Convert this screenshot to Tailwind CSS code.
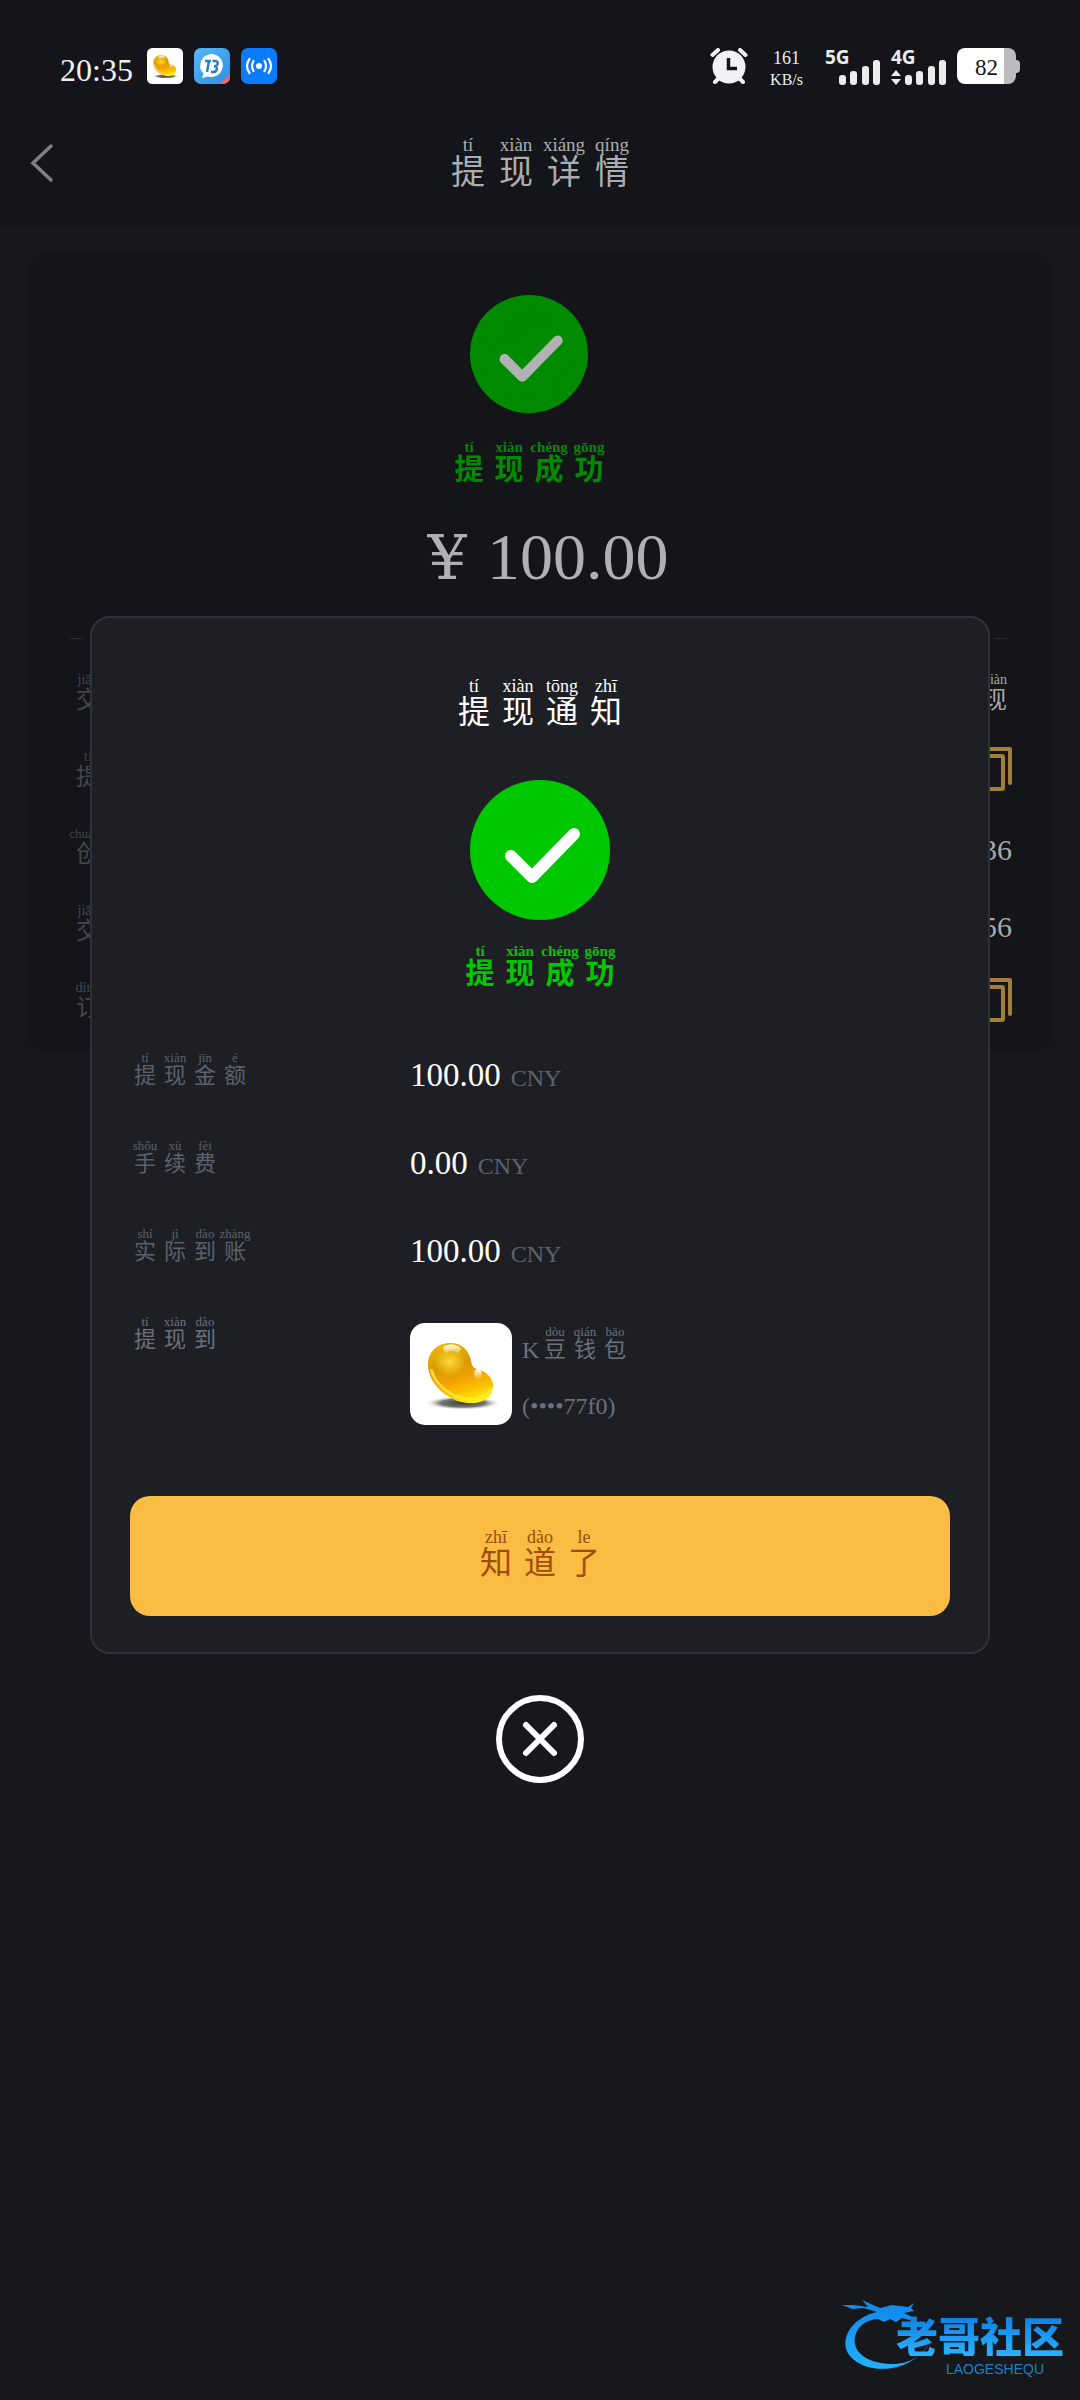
<!DOCTYPE html>
<html lang="zh-CN">
<head>
<meta charset="utf-8">
<meta name="viewport" content="width=device-width, initial-scale=1">
<title>提现详情</title>
<script src="https://cdn.jsdelivr.net/npm/@tailwindcss/browser@4"></script>
</head>
<body class="bg-[#17181c]">
<svg class="absolute size-0" aria-hidden="true">
  <defs>
    <linearGradient id="beanFill" x1="0.3" y1="0" x2="0.6" y2="1">
      <stop offset="0" stop-color="#e9b800"/><stop offset="0.35" stop-color="#d99a00"/><stop offset="0.6" stop-color="#f2a200"/><stop offset="0.82" stop-color="#ffc400"/><stop offset="1" stop-color="#fff200"/>
    </linearGradient>
    <radialGradient id="beanGlow"><stop offset="0" stop-color="#ffd83a"/><stop offset="1" stop-color="#ffd83a" stop-opacity="0"/></radialGradient>
    <radialGradient id="beanShade"><stop offset="0" stop-color="#3c3c3c"/><stop offset="0.6" stop-color="#777777"/><stop offset="1" stop-color="#ffffff" stop-opacity="0"/></radialGradient>
    <linearGradient id="shine" x1="0" y1="0" x2="0" y2="1"><stop offset="0" stop-color="#ffffff"/><stop offset="1" stop-color="#ffffff" stop-opacity="0.1"/></linearGradient>
    <linearGradient id="chat" x1="0" y1="0" x2="1" y2="1"><stop offset="0" stop-color="#56b8f5"/><stop offset="1" stop-color="#2c8fe6"/></linearGradient>
    <linearGradient id="dragon" x1="0" y1="0" x2="0" y2="1"><stop offset="0" stop-color="#0f86ea"/><stop offset="1" stop-color="#23b0ff"/></linearGradient>
    <symbol id="bean" viewBox="0 0 102 102">
      <rect width="102" height="102" rx="15" fill="#fff"/>
      <ellipse cx="53" cy="80" rx="38" ry="7" fill="url(#beanShade)"/>
      <path d="M40 20C52 19 60 29 61 38C62 43 63 45 67 46C78 49 84 57 83 64C82 76 70 81 58 80C38 79 18 60 18 42C18 29 27 20 40 20Z" fill="url(#beanFill)"/>
      <path d="M21 46C25 62 42 76 60 76C70 76 77 72 81 66" fill="none" stroke="#fff04a" stroke-width="3" stroke-opacity="0.7"/>
      <ellipse cx="40" cy="39" rx="16" ry="14" fill="url(#beanGlow)"/>
      <path d="M33 24C38 20 48 21 51 26L49 31C44 27 39 27 35 31Z" fill="url(#shine)"/>
      <ellipse cx="68" cy="51" rx="4" ry="5" fill="url(#shine)"/>
    </symbol>
    <symbol id="signal" viewBox="0 0 41 25">
      <rect x="0" y="15" width="7" height="10" rx="3"/><rect x="11" y="11" width="7" height="14" rx="3"/><rect x="23" y="6" width="7" height="19" rx="3"/><rect x="34" y="0" width="7" height="25" rx="3"/>
    </symbol>
    <symbol id="copy" viewBox="0 0 44 44">
      <path d="M9 2H42V36" fill="none" stroke="currentColor" stroke-width="4" stroke-linecap="round" stroke-linejoin="round"/>
      <rect x="2" y="9" width="33" height="33" rx="1" fill="none" stroke="currentColor" stroke-width="4"/>
    </symbol>
  </defs>
</svg>

<div class="relative min-h-screen overflow-hidden font-['Liberation_Serif','Noto_Sans_CJK_SC',serif] text-white">
  <header class="bg-[#14151a]">
    <div class="flex items-start justify-between pt-12 pr-[60px] pl-[60px]">
      <div class="flex h-[49px] items-start gap-[11px]">
        <time class="mr-[3px] pt-1 text-[32px]/[36px] text-[#f0f0f0]">20:35</time>
        <svg class="size-9"><use href="#bean"/></svg>
        <svg class="size-9" viewBox="0 0 36 36">
          <rect width="36" height="36" rx="7" fill="url(#chat)"/>
          <path d="M36 26V29A7 7 0 0 1 29 36H25Z" fill="#f0646a"/>
          <path d="M18 6A11.5 11.5 0 1 1 14 28.500L8 30L9.500 25.500A11.500 11.500 0 0 1 18 6Z" fill="#fff"/>
          <path d="M11 13H17M15 13L13 24M18.500 13H21.500Q24.500 13.500 23.500 16.500Q22.500 18.300 20 18.300Q23.500 18.500 22.800 21.500Q22 24 19 24H17" fill="none" stroke="#2b7fc2" stroke-width="2.500"/>
        </svg>
        <svg class="size-9" viewBox="0 0 36 36">
          <rect width="36" height="36" rx="7" fill="#0a7cff"/><circle cx="18" cy="18" r="3" fill="#fff"/>
          <path d="M12.500 13Q9.500 18 12.500 23M23.500 13Q26.500 18 23.500 23M8.500 11Q3.500 18 8.500 25M27.500 11Q32.500 18 27.500 25" fill="none" stroke="#fff" stroke-width="2.200" stroke-linecap="round"/>
        </svg>
      </div>
      <div class="flex items-start text-[#ececec]">
        <svg class="mr-[22px] h-9 w-[38px]" viewBox="0 0 38 36">
          <path d="M2.500 7L8 2M35.500 7L30 2M5 34L10 29M33 34L28 29" stroke="#f0f3f3" stroke-width="4" stroke-linecap="round"/>
          <circle cx="19" cy="19" r="16.500" fill="#f0f3f3"/><path d="M18.500 10V20.500H27" fill="none" stroke="#14151a" stroke-width="3.500"/>
        </svg>
        <div class="mr-[22px] flex flex-col items-center">
          <span class="text-[18px]/[20px]">161</span><span class="text-[16px]/[24px]">KB/s</span>
        </div>
        <div class="mr-[11px] flex flex-col">
          <span class="pt-0.5 font-['Noto_Sans'] text-[19px]/[14px] font-bold">5G</span>
          <svg class="-mt-1 ml-[14px] h-[25px] w-[41px] fill-[#ececec]"><use href="#signal"/></svg>
        </div>
        <div class="mr-[11px] flex flex-col">
          <span class="pt-0.5 font-['Noto_Sans'] text-[19px]/[14px] font-bold">4G</span>
          <div class="-mt-1 flex items-end gap-1">
            <svg class="h-[15px] w-[10px] fill-[#ececec]" viewBox="0 0 10 15"><path d="M5 0L10 6H0ZM5 15L0 9H10Z"/></svg>
            <svg class="h-[25px] w-[41px] fill-[#ececec]"><use href="#signal"/></svg>
          </div>
        </div>
        <div class="flex items-center">
          <div class="flex h-9 w-[59px] items-center justify-center rounded-lg bg-linear-to-r from-white from-80% to-[#bcbcbc] to-80% pt-1 text-[23px]/[22px] text-[#14151a]">82</div>
          <div class="h-[13px] w-1 rounded-r-sm bg-[#bcbcbc]"></div>
        </div>
      </div>
    </div>
    <div class="grid h-32 grid-cols-[1fr_auto_1fr] items-center px-[30px] pt-1">
      <button type="button" aria-label="返回" class="justify-self-start">
        <svg class="h-10 w-6" viewBox="0 0 24 40"><path d="M21 3L3 20L21 37" fill="none" stroke="#7d8086" stroke-width="3.500" stroke-linecap="round"/></svg>
      </button>
      <h1 class="flex text-[34px]/[36px] text-[#adadaf]">
        <ruby class="flex w-12 flex-col-reverse items-center">提<rt class="block text-[19px]/[20px]">tí</rt></ruby>
        <ruby class="flex w-12 flex-col-reverse items-center">现<rt class="block text-[19px]/[20px]">xiàn</rt></ruby>
        <ruby class="flex w-12 flex-col-reverse items-center">详<rt class="block text-[19px]/[20px]">xiáng</rt></ruby>
        <ruby class="flex w-12 flex-col-reverse items-center">情<rt class="block text-[19px]/[20px]">qíng</rt></ruby>
      </h1>
    </div>
  </header>

  <main class="mx-7 mt-7 rounded-[20px] bg-[#131519] px-10 pt-[42px] pb-4">
    <div class="flex flex-col items-center pr-[22px]">
      <svg class="size-[118px]" viewBox="0 0 140 140"><circle cx="70" cy="70" r="70" fill="#008a00"/><path d="M41 76L62 97L104 54" fill="none" stroke="#b2b2b4" stroke-width="12" stroke-linecap="round" stroke-linejoin="round"/></svg>
      <p class="mt-[26px] flex text-[29px]/[30px] font-bold text-[#008a00]">
        <ruby class="flex w-10 flex-col-reverse items-center">提<rt class="block text-[15px]/[16px]">tí</rt></ruby>
        <ruby class="flex w-10 flex-col-reverse items-center">现<rt class="block text-[15px]/[16px]">xiàn</rt></ruby>
        <ruby class="flex w-10 flex-col-reverse items-center">成<rt class="block text-[15px]/[16px]">chéng</rt></ruby>
        <ruby class="flex w-10 flex-col-reverse items-center">功<rt class="block text-[15px]/[16px]">gōng</rt></ruby>
      </p>
    </div>
    <p class="mt-10 flex items-baseline justify-center gap-5 pl-4 text-[66px]/[64px] text-[#b0b0b2]"><span class="font-['DejaVu_Serif'] text-[62px]/[64px]">¥</span><span>100.00</span></p>
    <div class="mx-0.5 mt-12 h-px bg-[repeating-linear-gradient(90deg,#2b2d33_0_13px,transparent_13px_21px)]"></div>
    <dl class="mt-[14px] text-[24px]/[24px] text-[#44474e]">
      <div class="flex h-[77px] items-center justify-between">
        <dt><ruby class="flex w-10 flex-col-reverse items-center">交<rt class="block text-[14px]/[16px]">jiāo</rt></ruby></dt>
        <dd class="flex pr-0.5 text-[#a8a8aa]">
          <ruby class="flex w-[30px] flex-col-reverse items-center">提<rt class="block text-[14px]/[16px]">tí</rt></ruby>
          <ruby class="flex w-[30px] flex-col-reverse items-center">现<rt class="block text-[14px]/[16px]">xiàn</rt></ruby>
        </dd>
      </div>
      <div class="flex h-[77px] items-center justify-between">
        <dt><ruby class="flex w-10 flex-col-reverse items-center">提<rt class="block text-[14px]/[16px]">tí</rt></ruby></dt>
        <dd><button type="button" aria-label="复制" class="block text-[#a17e3a]"><svg class="size-11"><use href="#copy"/></svg></button></dd>
      </div>
      <div class="flex h-[77px] items-center justify-between">
        <dt><ruby class="flex w-10 flex-col-reverse items-center">创<rt class="block text-[13px]/[16px]">chuàng</rt></ruby></dt>
        <dd class="pt-2 text-[30px]/[30px] text-[#a8a8aa]">36</dd>
      </div>
      <div class="flex h-[77px] items-center justify-between">
        <dt><ruby class="flex w-10 flex-col-reverse items-center">交<rt class="block text-[14px]/[16px]">jiāo</rt></ruby></dt>
        <dd class="pt-2 text-[30px]/[30px] text-[#a8a8aa]">56</dd>
      </div>
      <div class="flex h-[77px] items-center justify-between">
        <dt><ruby class="flex w-10 flex-col-reverse items-center">订<rt class="block text-[14px]/[16px]">dìng</rt></ruby></dt>
        <dd><button type="button" aria-label="复制" class="block text-[#a17e3a]"><svg class="size-11"><use href="#copy"/></svg></button></dd>
      </div>
    </dl>
  </main>

  <!-- Withdrawal notice dialog -->
  <div class="absolute inset-x-0 top-[616px] flex flex-col items-center px-[90px]">
    <section role="dialog" aria-label="提现通知" class="flex w-full flex-col rounded-[20px] border-2 border-[#2f313a] bg-[#1d1f25] px-[38px] pt-[58px] pb-9">
      <h2 class="flex justify-center text-[32px]/[32px]">
        <ruby class="flex w-11 flex-col-reverse items-center">提<rt class="block text-[18px]/[20px]">tí</rt></ruby>
        <ruby class="flex w-11 flex-col-reverse items-center">现<rt class="block text-[18px]/[20px]">xiàn</rt></ruby>
        <ruby class="flex w-11 flex-col-reverse items-center">通<rt class="block text-[18px]/[20px]">tōng</rt></ruby>
        <ruby class="flex w-11 flex-col-reverse items-center">知<rt class="block text-[18px]/[20px]">zhī</rt></ruby>
      </h2>
      <svg class="mt-[52px] size-[140px] self-center" viewBox="0 0 140 140"><circle cx="70" cy="70" r="70" fill="#00c800"/><path d="M41 76L62 97L104 54" fill="none" stroke="#fff" stroke-width="12" stroke-linecap="round" stroke-linejoin="round"/></svg>
      <p class="mt-[23px] flex justify-center text-[29px]/[30px] font-bold text-[#00c800]">
        <ruby class="flex w-10 flex-col-reverse items-center">提<rt class="block text-[15px]/[16px]">tí</rt></ruby>
        <ruby class="flex w-10 flex-col-reverse items-center">现<rt class="block text-[15px]/[16px]">xiàn</rt></ruby>
        <ruby class="flex w-10 flex-col-reverse items-center">成<rt class="block text-[15px]/[16px]">chéng</rt></ruby>
        <ruby class="flex w-10 flex-col-reverse items-center">功<rt class="block text-[15px]/[16px]">gōng</rt></ruby>
      </p>
      <dl class="mt-[62px] text-[22px]/[22px] text-[#5d616b]">
        <div class="grid h-[88px] grid-cols-[280px_1fr]">
          <dt class="flex">
            <ruby class="flex w-[30px] flex-col-reverse items-center justify-end">提<rt class="block text-[13px]/[14px]">tí</rt></ruby>
            <ruby class="flex w-[30px] flex-col-reverse items-center justify-end">现<rt class="block text-[13px]/[14px]">xiàn</rt></ruby>
            <ruby class="flex w-[30px] flex-col-reverse items-center justify-end">金<rt class="block text-[13px]/[14px]">jīn</rt></ruby>
            <ruby class="flex w-[30px] flex-col-reverse items-center justify-end">额<rt class="block text-[13px]/[14px]">é</rt></ruby>
          </dt>
          <dd class="flex items-baseline gap-[10px] pt-2 text-[24px]/[32px]"><span class="text-[33px] text-white">100.00</span>CNY</dd>
        </div>
        <div class="grid h-[88px] grid-cols-[280px_1fr]">
          <dt class="flex">
            <ruby class="flex w-[30px] flex-col-reverse items-center justify-end">手<rt class="block text-[13px]/[14px]">shǒu</rt></ruby>
            <ruby class="flex w-[30px] flex-col-reverse items-center justify-end">续<rt class="block text-[13px]/[14px]">xù</rt></ruby>
            <ruby class="flex w-[30px] flex-col-reverse items-center justify-end">费<rt class="block text-[13px]/[14px]">fèi</rt></ruby>
          </dt>
          <dd class="flex items-baseline gap-[10px] pt-2 text-[24px]/[32px]"><span class="text-[33px] text-white">0.00</span>CNY</dd>
        </div>
        <div class="grid h-[88px] grid-cols-[280px_1fr]">
          <dt class="flex">
            <ruby class="flex w-[30px] flex-col-reverse items-center justify-end">实<rt class="block text-[13px]/[14px]">shí</rt></ruby>
            <ruby class="flex w-[30px] flex-col-reverse items-center justify-end">际<rt class="block text-[13px]/[14px]">jì</rt></ruby>
            <ruby class="flex w-[30px] flex-col-reverse items-center justify-end">到<rt class="block text-[13px]/[14px]">dào</rt></ruby>
            <ruby class="flex w-[30px] flex-col-reverse items-center justify-end">账<rt class="block text-[13px]/[14px]">zhàng</rt></ruby>
          </dt>
          <dd class="flex items-baseline gap-[10px] pt-2 text-[24px]/[32px]"><span class="text-[33px] text-white">100.00</span>CNY</dd>
        </div>
        <div class="grid grid-cols-[280px_1fr]">
          <dt class="flex text-[#6c707a]">
            <ruby class="flex w-[30px] flex-col-reverse items-center justify-end">提<rt class="block text-[13px]/[14px]">tí</rt></ruby>
            <ruby class="flex w-[30px] flex-col-reverse items-center justify-end">现<rt class="block text-[13px]/[14px]">xiàn</rt></ruby>
            <ruby class="flex w-[30px] flex-col-reverse items-center justify-end">到<rt class="block text-[13px]/[14px]">dào</rt></ruby>
          </dt>
          <dd class="flex gap-[10px] pt-2 text-[#6c707a]">
            <svg class="size-[102px]"><use href="#bean"/></svg>
            <div class="flex flex-col justify-between pt-0.5 pb-2">
              <span class="flex items-end"><span class="w-[18px] text-[24px]">K</span>
                <ruby class="flex w-[30px] flex-col-reverse items-center">豆<rt class="block text-[13px]/[14px]">dòu</rt></ruby>
                <ruby class="flex w-[30px] flex-col-reverse items-center">钱<rt class="block text-[13px]/[14px]">qián</rt></ruby>
                <ruby class="flex w-[30px] flex-col-reverse items-center">包<rt class="block text-[13px]/[14px]">bāo</rt></ruby>
              </span>
              <span class="text-[24px]">(••••77f0)</span>
            </div>
          </dd>
        </div>
      </dl>
      <button type="button" class="mt-[71px] flex h-[120px] items-center justify-center rounded-[20px] bg-[#fabc42] pb-1.5 text-[32px]/[32px] text-[#a04d08]">
        <ruby class="flex w-11 flex-col-reverse items-center">知<rt class="block text-[18px]/[20px]">zhī</rt></ruby>
        <ruby class="flex w-11 flex-col-reverse items-center">道<rt class="block text-[18px]/[20px]">dào</rt></ruby>
        <ruby class="flex w-11 flex-col-reverse items-center">了<rt class="block text-[18px]/[20px]">le</rt></ruby>
      </button>
    </section>
    <button type="button" aria-label="关闭" class="mt-[41px]">
      <svg class="block size-[88px]" viewBox="0 0 88 88"><circle cx="44" cy="44" r="41" fill="none" stroke="#fff" stroke-width="6"/><path d="M30 30L58 58M58 30L30 58" stroke="#fff" stroke-width="6" stroke-linecap="round"/></svg>
    </button>
  </div>

  <!-- Community watermark -->
  <div class="absolute right-4 bottom-6 h-[76px] w-[222px]">
    <svg class="absolute inset-0 size-full" viewBox="0 0 222 76">
      <path d="M35 12C8 18 -4 42 8 56C26 77 72 72 87 43C83 54 68 65 48 64C24 63 10 51 13 37C15 26 24 20 36 19L42 22L48 19L54 22L60 18L68 20L70 17L62 13L72 11L69 8L72 3L66 7L50 5L38 8L20 0L26 7L12 5L0 5L10 9L22 8Z" fill="url(#dragon)"/>
    </svg>
    <div class="absolute right-0 bottom-0 flex flex-col items-end gap-1.5 font-['Noto_Sans_CJK_SC',sans-serif]">
      <span class="bg-linear-to-b from-[#0f7de0] to-[#2bb2ff] bg-clip-text text-[42px]/[42px] font-black text-transparent">老哥社区</span>
      <span class="mr-5 font-['Liberation_Sans'] text-[14px]/[14px] text-[#1f7fc4]">LAOGESHEQU</span>
    </div>
  </div>
</div>
</body>
</html>
